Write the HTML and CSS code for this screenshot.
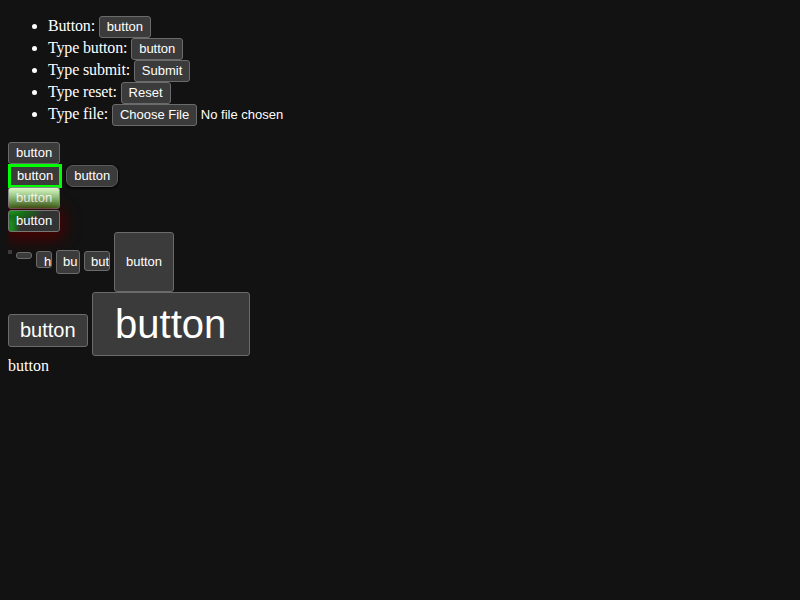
FILE: index.html
```html
<!DOCTYPE html>
<html>
<head>
<meta charset="utf-8">
<link rel="stylesheet" href="styles.css">
</head>
<body>
<ul class="list">
  <li>Button: <button class="btn">button</button></li>
  <li>Type button: <button class="btn" type="button">button</button></li>
  <li>Type submit: <button class="btn" type="submit">Submit</button></li>
  <li>Type reset: <button class="btn" type="reset">Reset</button></li>
  <li>Type file: <span class="file"><button class="btn">Choose File</button> No file chosen</span></li>
</ul>
<div class="row"><button class="btn">button</button></div>
<div class="row"><button class="btn green-border">button</button> <button class="btn rounded">button</button></div>
<div class="row"><button class="btn gradient">button</button></div>
<div class="row"><button class="btn glow">button</button></div>
<div class="sizes"><button class="btn s0"></button> <button class="btn s1"></button> <button class="btn s2">h</button> <button class="btn s3">bu</button> <button class="btn s4">but</button> <button class="btn s5">button</button></div>
<div class="row"><button class="btn big">button</button> <button class="btn huge">button</button></div>
<div class="row"><button class="plain">button</button></div>
</body>
</html>
```

FILE: styles.css
```css
body {
  margin: 8px;
  background: #121212;
  color: #ffffff;
  font-family: "Liberation Serif", serif;
  font-size: 16px;
}
.list {
  margin: 8px 0 16px;
  padding-left: 40px;
  line-height: 20px;
  letter-spacing: -0.15px;
}
.list li {
  padding-top: 1px;
  margin-top: -1px;
}
.btn {
  font-family: "Liberation Sans", Arial, sans-serif;
  font-size: 13px;
  line-height: 16px;
  letter-spacing: 0;
  color: #ffffff;
  background: #3b3b3b;
  border: 1px solid #6b6b6b;
  border-radius: 3px;
  padding: 2px 7px;
  margin: 0;
}
.file {
  font-family: "Liberation Sans", Arial, sans-serif;
  font-size: 13px;
  letter-spacing: 0;
}
.row {
  line-height: 0;
}
.row .btn {
  vertical-align: top;
}
.green-border {
  border: 3px solid #00ff00;
  border-radius: 0;
  padding: 1px 6px;
}
.row .rounded {
  border-radius: 7px;
  border-color: #5a5a5a;
  box-shadow: 0 1px 3px #000;
  margin-top: 1px;
}
.gradient {
  background: linear-gradient(#dcf6c8, #3e8e2a);
  border-color: #8a8a8a;
  margin-top: -1px;
}
.glow {
  background: radial-gradient(ellipse 70% 60% at 0 0, #1e9a1e 0%, #157015 45%, transparent 100%), linear-gradient(90deg, #1a8a1a 0px, #1a8a1a 3px, #333 12px, #333 100%);
  border-color: #777;
  box-shadow: 0 3px 16px 4px #4a0000;
  margin-top: 1px;
}
.sizes {
  line-height: 18px;
}
.sizes .btn {
  box-sizing: border-box;
  overflow: hidden;
  text-align: left;
  vertical-align: baseline;
}
.s0 {
  width: 4px;
  height: 4px;
  padding: 0;
  border-radius: 0;
  border-color: #3b3b3b;
}
.sizes .s0 {
  vertical-align: 13px;
}
.s1 {
  width: 16px;
  height: 7px;
  border-radius: 3px;
}
.sizes .s1 {
  vertical-align: 10px;
}
.s2 {
  width: 16px;
  height: 17px;
  padding: 3px 2px 0 7px;
  line-height: 14px;
}
.s3 {
  width: 24px;
  height: 24px;
  padding: 2px 6px;
}
.s4 {
  width: 26px;
  height: 20px;
  padding: 2px 6px 0;
}
.sizes .s5 {
  width: 60px;
  height: 60px;
  text-align: center;
}
.big {
  font-size: 20px;
  line-height: 23px;
  padding: 4px 11px;
  margin-top: 22px;
}
.huge {
  font-size: 40px;
  line-height: 46px;
  padding: 8px 22.5px;
}
.plain {
  all: unset;
  line-height: 18px;
  display: inline-block;
  margin-top: 1px;
}
```
